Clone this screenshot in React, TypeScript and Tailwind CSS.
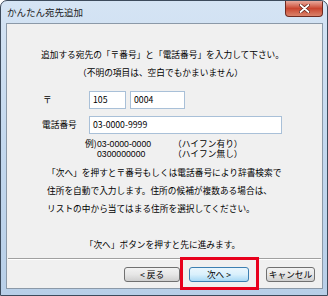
export default function App() {
  const jp = { fontFamily: '"Noto Sans CJK JP", "Noto Sans", sans-serif' };
  const btn =
    "h-[15px] flex items-center justify-center rounded-[3px] border border-[#707070] bg-gradient-to-b from-[#f2f2f2] via-[#e6e6e6] to-[#cfcfcf] text-[8.7px] text-black";

  return (
    <div
      className="relative w-[328px] h-[296px] overflow-hidden rounded-t-[7px] border border-[#3d4b5c] bg-gradient-to-b from-[#d5e4f4] via-[#c3d8ee] to-[#b8cfe8] flex flex-col"
      style={jp}
    >
      {/* title bar */}
      <div className="h-[22px] flex items-start shrink-0">
        <div className="pl-[6px] pt-[5px] text-[9.5px] leading-[12px] text-[#1b1b1b]">かんたん宛先追加</div>
        <div className="ml-auto mr-[4px] w-[38px] h-[16px] rounded-b-[4px] border border-t-0 border-[#6e2a20] bg-gradient-to-b from-[#e8a99d] via-[#c9452f] to-[#d9826a] flex items-center justify-center">
          <svg width="11" height="9" viewBox="0 0 11 9">
            <path d="M1.5 1 L9.5 8 M9.5 1 L1.5 8" stroke="#5a1d14" strokeWidth="3.2" strokeLinecap="round" />
            <path d="M1.5 1 L9.5 8 M9.5 1 L1.5 8" stroke="#ffffff" strokeWidth="1.8" strokeLinecap="round" />
          </svg>
        </div>
      </div>

      {/* client panel */}
      <div className="ml-[5px] w-[317px] h-[266px] border border-[#8b99a8] bg-[#f0f0f0] flex flex-col text-[8.7px] text-black">
        <div className="pt-[22px] text-center leading-[18px] pr-[4px]">
          <p>追加する宛先の「〒番号」と「電話番号」を入力して下さい。</p>
          <p className="pr-[4px]">（不明の項目は、空白でもかまいません）</p>
        </div>

        <div className="mt-[9px] flex items-center h-[18px]">
          <span className="ml-[36px] w-[46px]">〒</span>
          <div className="w-[37px] h-[18px] border border-[#a9c0d8] bg-white pl-[3px] leading-[16px]">105</div>
          <div className="ml-[4px] w-[55px] h-[18px] border border-[#a9c0d8] bg-white pl-[3px] leading-[16px]">0004</div>
        </div>

        <div className="mt-[7px] flex items-center h-[18px]">
          <span className="ml-[35px] w-[47px]">電話番号</span>
          <div className="w-[193px] h-[18px] border border-[#a9c0d8] bg-white pl-[3px] leading-[16px]">03-0000-9999</div>
        </div>

        {/* examples */}
        <div className="mt-[5px] ml-[78px] flex leading-[10px]">
          <span className="w-[12px]">例)</span>
          <span className="w-[76px] font-['Liberation_Sans']">
            03-0000-0000
            <br />
            0300000000
          </span>
          <span>
            （ハイフン有り）
            <br />
            （ハイフン無し）
          </span>
        </div>

        <div className="mt-[5px] ml-[40px] leading-[18px]">
          <p>「次へ」を押すと〒番号もしくは電話番号により辞書検索で</p>
          <p>住所を自動で入力します。住所の候補が複数ある場合は、</p>
          <p>リストの中から当てはまる住所を選択してください。</p>
        </div>

        <p className="mt-[18px] text-center leading-[18px] pr-[4px]">「次へ」ボタンを押すと先に進みます。</p>

        <div className="mt-[4px] mx-[1px] h-[2px] border-t border-[#a0a0a0] border-b border-b-white"></div>

        <div className="mt-[7px] flex items-center">
          <div className={`${btn} ml-[117px] w-[56px]`}>&lt; 戻る</div>
          <div className="ml-[9px] w-[60px] h-[15px] flex items-center justify-center rounded-[3px] border border-[#3c7fb1] bg-gradient-to-b from-[#eaf6fd] via-[#d9f0fc] to-[#a7d9f5] text-[8.7px]">
            次へ &gt;
          </div>
          <div className={`${btn} ml-[17px] w-[49px]`}>キャンセル</div>
        </div>
      </div>

      {/* annotation */}
      <div className="absolute left-[179px] top-[256px] w-[79px] h-[33px] border-[3px] border-[#e8001c]"></div>
    </div>
  );
}
